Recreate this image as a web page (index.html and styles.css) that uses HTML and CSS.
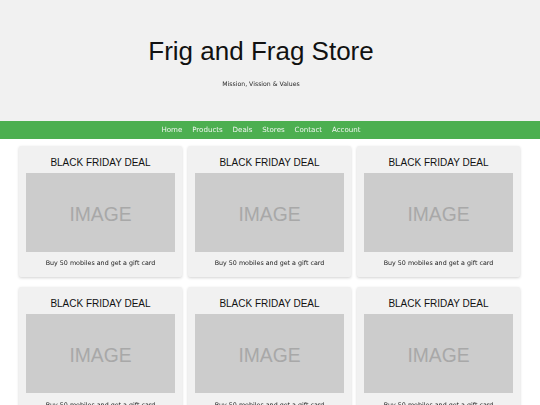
FILE: index.html
```html
<!DOCTYPE html>
<html lang="en">
<head>
<meta charset="utf-8">
<title>Frig and Frag Store</title>
<link rel="stylesheet" href="styles.css">
</head>
<body>
<header class="header">
  <h1 class="title">Frig and Frag Store</h1>
  <p class="subtitle">Mission, Vission &amp; Values</p>
</header>
<nav class="nav">
  <a href="#">Home</a>
  <a href="#">Products</a>
  <a href="#">Deals</a>
  <a href="#">Stores</a>
  <a href="#">Contact</a>
  <a href="#">Account</a>
</nav>
<main class="grid">
  <div class="card"><h2 class="card-title">BLACK FRIDAY DEAL</h2><div class="image">IMAGE</div><p class="caption">Buy 50 mobiles and get a gift card</p></div>
  <div class="card"><h2 class="card-title">BLACK FRIDAY DEAL</h2><div class="image">IMAGE</div><p class="caption">Buy 50 mobiles and get a gift card</p></div>
  <div class="card"><h2 class="card-title">BLACK FRIDAY DEAL</h2><div class="image">IMAGE</div><p class="caption">Buy 50 mobiles and get a gift card</p></div>
  <div class="card"><h2 class="card-title">BLACK FRIDAY DEAL</h2><div class="image">IMAGE</div><p class="caption">Buy 50 mobiles and get a gift card</p></div>
  <div class="card"><h2 class="card-title">BLACK FRIDAY DEAL</h2><div class="image">IMAGE</div><p class="caption">Buy 50 mobiles and get a gift card</p></div>
  <div class="card"><h2 class="card-title">BLACK FRIDAY DEAL</h2><div class="image">IMAGE</div><p class="caption">Buy 50 mobiles and get a gift card</p></div>
</main>
</body>
</html>
```
FILE: styles.css
```css
html, body {
  margin: 0;
  padding: 0;
  background: #ffffff;
}
body {
  font-family: "DejaVu Sans", Verdana, sans-serif;
  -webkit-font-smoothing: antialiased;
}
.header {
  background: #f1f1f1;
  height: 121px;
  box-sizing: border-box;
  padding: 36px 18px 0 0;
  text-align: center;
}
.title {
  margin: 0;
  font-family: "Liberation Sans", Arial, sans-serif;
  font-weight: normal;
  font-size: 26px;
  line-height: 30px;
  color: #111111;
}
.subtitle {
  margin: 13.5px 0 0;
  font-size: 6.2px;
  line-height: 8px;
  color: #2a2a2a;
  will-change: transform;
}
.nav {
  background: #4caf50;
  height: 18px;
  display: flex;
  justify-content: center;
  align-items: center;
  gap: 9.8px;
  padding-right: 18px;
  will-change: transform;
}
.nav a {
  color: #eef5ee;
  text-decoration: none;
  font-size: 7.1px;
  line-height: 18px;
}
.grid {
  display: grid;
  grid-template-columns: repeat(3, 1fr);
  column-gap: 6px;
  row-gap: 10px;
  padding: 7px 20px 20px 19px;
}
.card {
  background: #f1f1f1;
  box-shadow: 0 1px 3px rgba(0, 0, 0, 0.18);
  border-radius: 2px;
  padding: 7px 7px 10px;
  text-align: center;
}
.card-title {
  margin: 3.5px 0 5px;
  font-family: "Liberation Sans", Arial, sans-serif;
  font-weight: normal;
  font-size: 10px;
  line-height: 11.5px;
  color: #111111;
}
.image {
  background: #cccccc;
  height: 79px;
  box-sizing: border-box;
  padding-top: 4px;
  display: flex;
  align-items: center;
  justify-content: center;
  font-family: "Liberation Sans", Arial, sans-serif;
  font-size: 19.3px;
  color: #a8a8a8;
}
.caption {
  margin: 7.3px 0 0;
  font-size: 6.35px;
  line-height: 8px;
  color: #222222;
  will-change: transform;
}
```
